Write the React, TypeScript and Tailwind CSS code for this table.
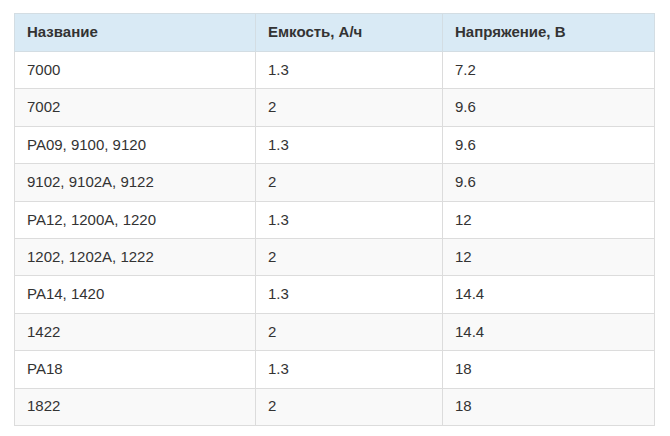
const rows: [string, string, string][] = [
  ["7000", "1.3", "7.2"],
  ["7002", "2", "9.6"],
  ["PA09, 9100, 9120", "1.3", "9.6"],
  ["9102, 9102A, 9122", "2", "9.6"],
  ["PA12, 1200A, 1220", "1.3", "12"],
  ["1202, 1202A, 1222", "2", "12"],
  ["PA14, 1420", "1.3", "14.4"],
  ["1422", "2", "14.4"],
  ["PA18", "1.3", "18"],
  ["1822", "2", "18"],
];

export default function App() {
  return (
    <div className="w-[670px] h-[436px] bg-white pt-[13px] pl-[14px] font-['Liberation_Sans',Arial,sans-serif] text-[15px] text-[#333]">
      <table className="w-[640px] border-collapse table-fixed border border-[#dcdcdc]">
        <colgroup>
          <col className="w-[241px]" />
          <col className="w-[187px]" />
          <col className="w-[212px]" />
        </colgroup>
        <thead>
          <tr className="h-[38px] bg-[#d9eaf5]">
            <th className="border border-[#d3dde3] px-3 text-left font-bold">Название</th>
            <th className="border border-[#d3dde3] px-3 text-left font-bold">Емкость, А/ч</th>
            <th className="border border-[#d3dde3] px-3 text-left font-bold">Напряжение, В</th>
          </tr>
        </thead>
        <tbody>
          {rows.map((r, i) => (
            <tr key={i} className={`h-[37.4px] ${i % 2 === 1 ? "bg-[#f9f9f9]" : "bg-white"}`}>
              {r.map((c, j) => (
                <td key={j} className="border border-[#dcdcdc] px-3">
                  {c}
                </td>
              ))}
            </tr>
          ))}
        </tbody>
      </table>
    </div>
  );
}
